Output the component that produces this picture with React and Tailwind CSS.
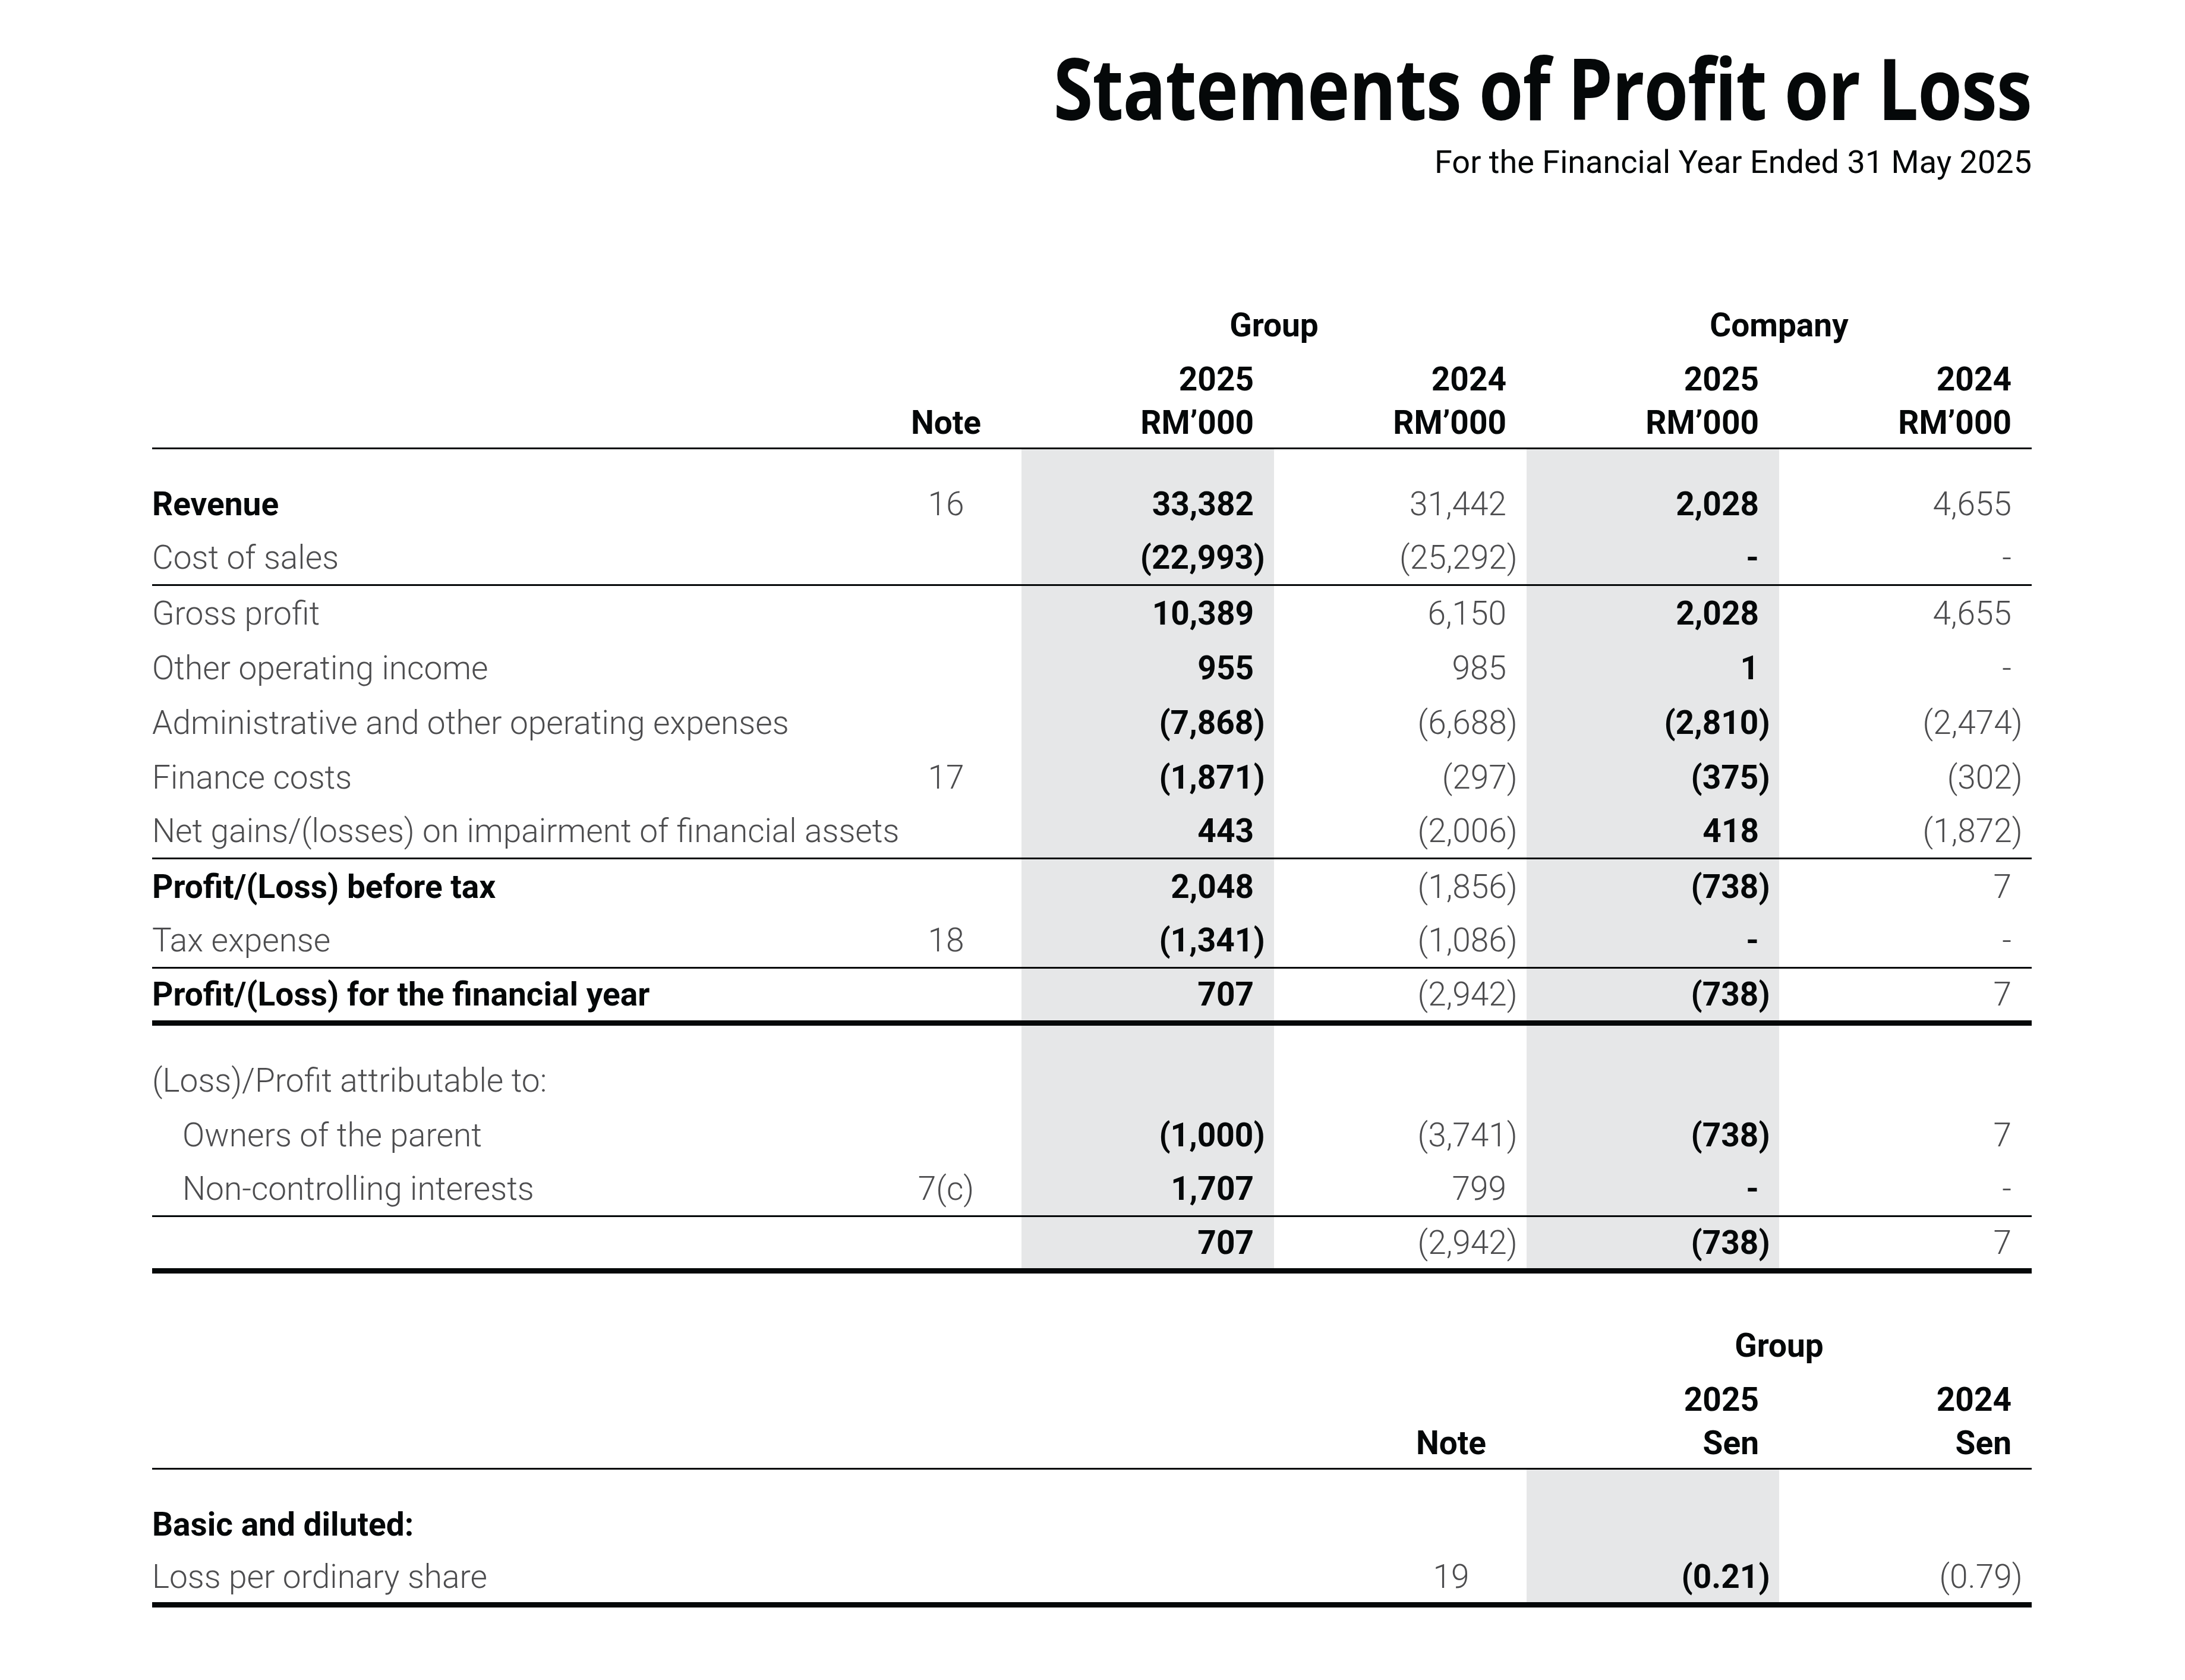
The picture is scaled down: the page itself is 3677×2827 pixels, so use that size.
import clsx from 'clsx'

const INK = 'text-[#050809]'
const GREY = 'text-[#4d4d4f]'
const SHADE = 'bg-[#e6e7e8]'

const rows = [
  { label: 'Revenue', note: '16', v: ['33,382', '31,442', '2,028', '4,655'], bold: true },
  { label: 'Cost of sales', v: ['(22,993)', '(25,292)', '-', '-'], line: 'thin' },
  { label: 'Gross profit', v: ['10,389', '6,150', '2,028', '4,655'] },
  { label: 'Other operating income', v: ['955', '985', '1', '-'] },
  { label: 'Administrative and other operating expenses', v: ['(7,868)', '(6,688)', '(2,810)', '(2,474)'] },
  { label: 'Finance costs', note: '17', v: ['(1,871)', '(297)', '(375)', '(302)'] },
  { label: 'Net gains/(losses) on impairment of financial assets', v: ['443', '(2,006)', '418', '(1,872)'], line: 'thin' },
  { label: 'Profit/(Loss) before tax', v: ['2,048', '(1,856)', '(738)', '7'], bold: true },
  { label: 'Tax expense', note: '18', v: ['(1,341)', '(1,086)', '-', '-'], line: 'thin' },
  { label: 'Profit/(Loss) for the financial year', v: ['707', '(2,942)', '(738)', '7'], bold: true, line: 'thick', h: 'h-[96px]' },
  { spacer: true },
  { label: '(Loss)/Profit attributable to:', v: ['', '', '', ''] },
  { label: 'Owners of the parent', v: ['(1,000)', '(3,741)', '(738)', '7'], indent: true },
  { label: 'Non-controlling interests', note: '7(c)', v: ['1,707', '799', '-', '-'], indent: true, line: 'thin' },
  { label: '', v: ['707', '(2,942)', '(738)', '7'], line: 'thick', h: 'h-[95px]' },
]

function Num({ value }) {
  if (value.startsWith('(')) {
    return (
      <span>
        {value.slice(0, -1)}
        <span className="-mr-[0.34em]">)</span>
      </span>
    )
  }
  return <span>{value}</span>
}

function ValueCell({ value, shaded }) {
  return (
    <div className={clsx('flex items-center justify-end pr-[34px]', shaded ? `${SHADE} ${INK} font-bold` : `${GREY} font-light`)}>
      <Num value={value} />
    </div>
  )
}

function lineClass(line, h) {
  if (line === 'thick') return clsx(h || 'h-[95px]', 'border-b-[9px] border-[#050809]')
  if (line === 'thin') return 'h-[92px] border-b-[3px] border-[#050809]'
  return 'h-[92px]'
}

const COLS = 'grid grid-cols-[1209px_254px_repeat(4,425px)]'
const EPS_COLS = 'grid grid-cols-[1fr_254px_425px_425px]'

function Row({ r }) {
  if (r.spacer) {
    return (
      <div className={clsx(COLS, 'h-[46px]')}>
        <div />
        <div />
        <div className={SHADE} />
        <div />
        <div className={SHADE} />
        <div />
      </div>
    )
  }
  return (
    <div className={clsx(COLS, lineClass(r.line, r.h))}>
      <div className={clsx('flex items-center whitespace-nowrap', r.indent && 'pl-[51px]', r.bold ? `${INK} font-bold` : `${GREY} font-light`)}>
        {r.label}
      </div>
      <div className={clsx('flex items-center justify-center font-light', GREY)}>{r.note}</div>
      {r.v.map((v, i) => (
        <ValueCell key={i} value={v} shaded={i % 2 === 0} />
      ))}
    </div>
  )
}

function HeadCell({ children, center, className }) {
  return (
    <div className={clsx('flex items-center font-bold', INK, center ? 'justify-center' : 'justify-end pr-[34px]', className)}>
      {children}
    </div>
  )
}

export default function App() {
  return (
    <div className="w-[3677px] h-[2827px] bg-white pt-[75px] pl-[256px] pr-[258px] font-['Roboto',sans-serif] text-[55px] leading-none">
      <header className="flex flex-col items-end">
        <h1 className={clsx("font-['Open_Sans',sans-serif] font-bold text-[143px] leading-none tracking-[-0.01em] scale-x-[0.845] origin-right whitespace-nowrap", INK)}>
          Statements of Profit or Loss
        </h1>
        <p className={clsx('mt-[28px] text-[54px] leading-none font-normal', INK)}>For the Financial Year Ended 31 May 2025</p>
      </header>

      {/* Group / Company */}
      <section className="mt-[201px]">
        <div className={clsx(COLS, 'h-[106px] pb-[14px]')}>
          <div />
          <div />
          <HeadCell center className="col-span-2">Group</HeadCell>
          <HeadCell center className="col-span-2">Company</HeadCell>
        </div>
        <div className={clsx(COLS, 'h-[62px]')}>
          <div />
          <div />
          <HeadCell>2025</HeadCell>
          <HeadCell>2024</HeadCell>
          <HeadCell>2025</HeadCell>
          <HeadCell>2024</HeadCell>
        </div>
        <div className={clsx(COLS, 'h-[87px] border-b-[3px] border-[#050809]')}>
          <div />
          <HeadCell center>Note</HeadCell>
          <HeadCell>RM’000</HeadCell>
          <HeadCell>RM’000</HeadCell>
          <HeadCell>RM’000</HeadCell>
          <HeadCell>RM’000</HeadCell>
        </div>
        <Row r={{ spacer: true }} />
        {rows.map((r, i) => (
          <Row key={i} r={r} />
        ))}
      </section>

      {/* earnings per share */}
      <section className="mt-[75px]">
        <div className={clsx(EPS_COLS, 'h-[106px] pb-[14px]')}>
          <div />
          <div />
          <HeadCell center className="col-span-2">Group</HeadCell>
        </div>
        <div className={clsx(EPS_COLS, 'h-[62px]')}>
          <div />
          <div />
          <HeadCell>2025</HeadCell>
          <HeadCell>2024</HeadCell>
        </div>
        <div className={clsx(EPS_COLS, 'h-[87px] border-b-[3px] border-[#050809]')}>
          <div />
          <HeadCell center>Note</HeadCell>
          <HeadCell>Sen</HeadCell>
          <HeadCell>Sen</HeadCell>
        </div>
        <div className={clsx(EPS_COLS, 'h-[46px]')}>
          <div />
          <div />
          <div className={SHADE} />
          <div />
        </div>
        <div className={clsx(EPS_COLS, 'h-[92px]')}>
          <div className={clsx('flex items-center font-bold', INK)}>Basic and diluted:</div>
          <div />
          <div className={SHADE} />
          <div />
        </div>
        <div className={clsx(EPS_COLS, 'h-[94px] border-b-[9px] border-[#050809]')}>
          <div className={clsx('flex items-center font-light', GREY)}>Loss per ordinary share</div>
          <div className={clsx('flex items-center justify-center font-light', GREY)}>19</div>
          <ValueCell value="(0.21)" shaded />
          <ValueCell value="(0.79)" />
        </div>
      </section>
    </div>
  )
}
